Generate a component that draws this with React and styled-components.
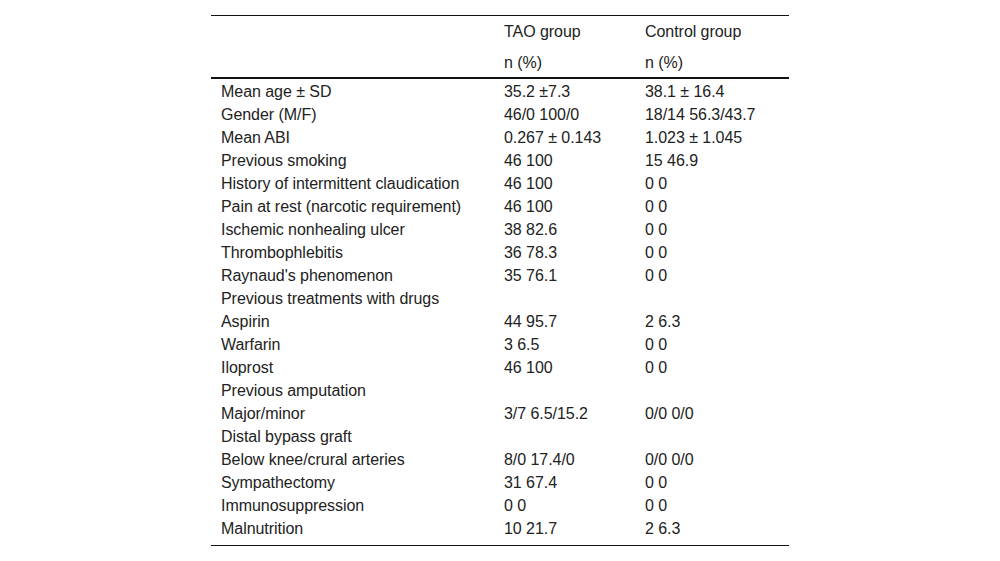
import styled, { createGlobalStyle } from "styled-components";

const GlobalStyle = createGlobalStyle`
  body {
    margin: 0;
    background: #fff;
    font-family: "Liberation Sans", Arial, sans-serif;
    color: #222;
  }
`;

const Wrap = styled.div`
  display: flex;
  justify-content: center;
  padding-top: 15px;
`;

const Table = styled.table`
  width: 578px;
  border-collapse: collapse;
  font-size: 16px;
  letter-spacing: -0.05px;
  border-top: 1px solid #111;
  border-bottom: 1px solid #111;

  thead tr:last-child {
    border-bottom: 2px solid #111;
  }
  tbody tr:first-child td {
    padding-top: 1px;
  }
  tbody tr:last-child td {
    padding-bottom: 5px;
  }
`;

const Th = styled.th`
  font-weight: normal;
  text-align: left;
  height: 31px;
  padding: 2px 10px 0;
  vertical-align: middle;
  width: ${(p) => p.w}px;
  box-sizing: border-box;
`;

const Td = styled.td`
  height: 23px;
  padding: 0 10px;
  line-height: 23px;
  white-space: nowrap;
`;

const rows = [
  ["Mean age ± SD", "35.2 ±7.3", "38.1 ± 16.4"],
  ["Gender (M/F)", "46/0 100/0", "18/14 56.3/43.7"],
  ["Mean ABI", "0.267 ± 0.143", "1.023 ± 1.045"],
  ["Previous smoking", "46 100", "15 46.9"],
  ["History of intermittent claudication", "46 100", "0 0"],
  ["Pain at rest (narcotic requirement)", "46 100", "0 0"],
  ["Ischemic nonhealing ulcer", "38 82.6", "0 0"],
  ["Thrombophlebitis", "36 78.3", "0 0"],
  ["Raynaud's phenomenon", "35 76.1", "0 0"],
  ["Previous treatments with drugs", "", ""],
  ["Aspirin", "44 95.7", "2 6.3"],
  ["Warfarin", "3 6.5", "0 0"],
  ["Iloprost", "46 100", "0 0"],
  ["Previous amputation", "", ""],
  ["Major/minor", "3/7 6.5/15.2", "0/0 0/0"],
  ["Distal bypass graft", "", ""],
  ["Below knee/crural arteries", "8/0 17.4/0", "0/0 0/0"],
  ["Sympathectomy", "31 67.4", "0 0"],
  ["Immunosuppression", "0 0", "0 0"],
  ["Malnutrition", "10 21.7", "2 6.3"],
];

export default function App() {
  return (
    <Wrap>
      <GlobalStyle />
      <Table>
        <thead>
          <tr>
            <Th w={283} />
            <Th w={141}>TAO group</Th>
            <Th w={154}>Control group</Th>
          </tr>
          <tr>
            <Th />
            <Th>n (%)</Th>
            <Th>n (%)</Th>
          </tr>
        </thead>
        <tbody>
          {rows.map((r, i) => (
            <tr key={i}>
              <Td>{r[0]}</Td>
              <Td>{r[1]}</Td>
              <Td>{r[2]}</Td>
            </tr>
          ))}
        </tbody>
      </Table>
    </Wrap>
  );
}
